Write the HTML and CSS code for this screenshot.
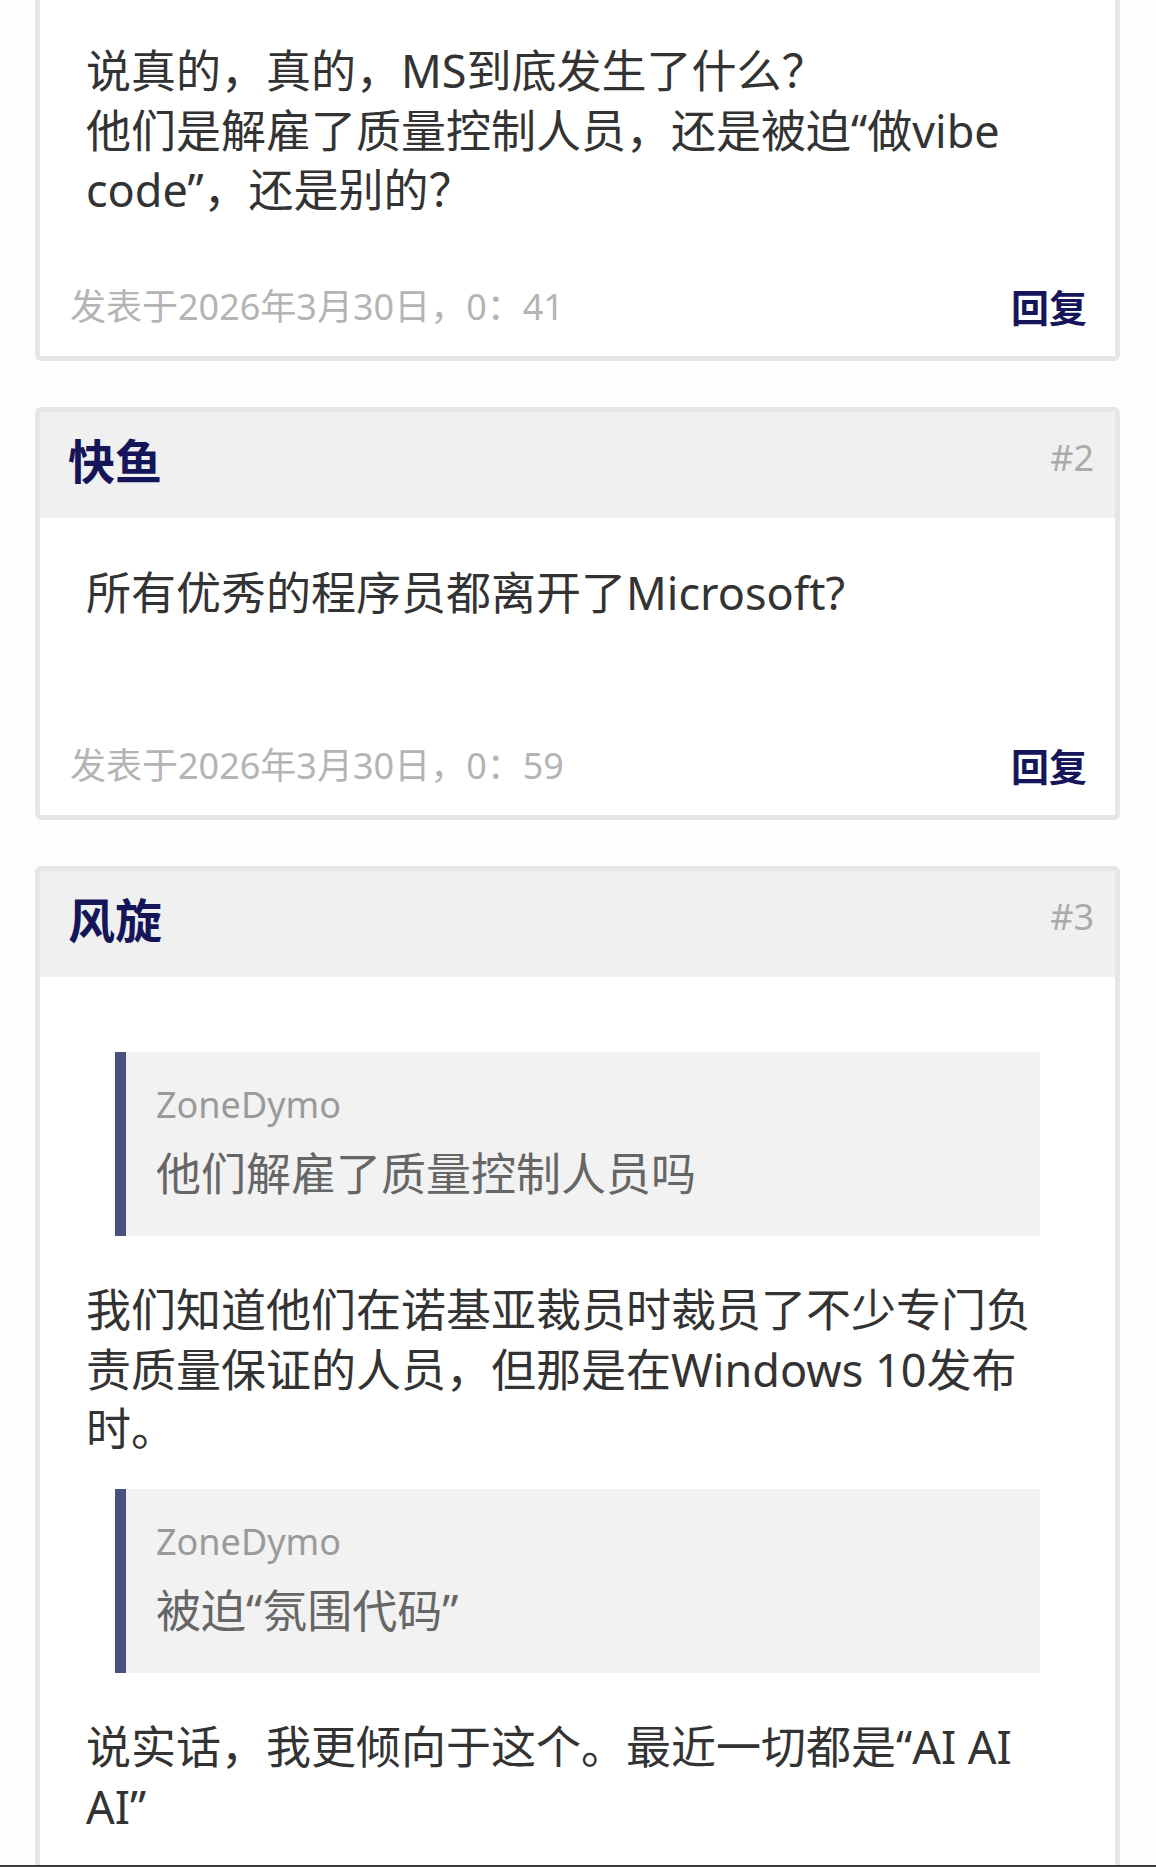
FILE: index.html
```html
<!DOCTYPE html>
<html lang="zh-CN">
<head>
<meta charset="utf-8">
<title>评论</title>
<link rel="stylesheet" href="styles.css">
</head>
<body>
<main class="thread">
  <article class="post post-cut">
    <div class="post-body">
      <p>说真的，真的，MS到底发生了什么？<br>他们是解雇了质量控制人员，还是被迫“做vibe code”，还是别的？</p>
    </div>
    <footer class="post-foot">
      <span class="post-date">发表于2026年3月30日，0：41</span>
      <a class="post-reply">回复</a>
    </footer>
  </article>

  <article class="post">
    <header class="post-head">
      <span class="post-author">快鱼</span>
      <span class="post-num">#2</span>
    </header>
    <div class="post-body post-body-min">
      <p>所有优秀的程序员都离开了Microsoft?</p>
    </div>
    <footer class="post-foot">
      <span class="post-date">发表于2026年3月30日，0：59</span>
      <a class="post-reply">回复</a>
    </footer>
  </article>

  <article class="post">
    <header class="post-head">
      <span class="post-author">风旋</span>
      <span class="post-num">#3</span>
    </header>
    <div class="post-body">
      <blockquote class="quote">
        <div class="quote-author">ZoneDymo</div>
        <div class="quote-text">他们解雇了质量控制人员吗</div>
      </blockquote>
      <p>我们知道他们在诺基亚裁员时裁员了不少专门负责质量保证的人员，但那是在Windows 10发布时。</p>
      <blockquote class="quote">
        <div class="quote-author">ZoneDymo</div>
        <div class="quote-text">被迫“氛围代码”</div>
      </blockquote>
      <p>说实话，我更倾向于这个。最近一切都是“AI AI AI”</p>
    </div>
  </article>
</main>
<div class="screen-edge"></div>
</body>
</html>
```
FILE: styles.css
```css
html, body {
  margin: 0;
  padding: 0;
  height: 1867px;
  overflow: hidden;
  background: #fdfdfd;
}

body {
  font-family: "Noto Sans", "Noto Sans CJK SC", sans-serif;
  color: #333333;
}

.thread {
  display: flex;
  flex-direction: column;
  gap: 46px;
  padding: 0 36px 0 35px;
}

.post {
  background: #ffffff;
  border: 5px solid #e6e6e6;
  border-radius: 6px;
}

.post-cut {
  border-top: 0;
  border-top-left-radius: 0;
  border-top-right-radius: 0;
}

.post-head {
  height: 106px;
  box-sizing: border-box;
  background: #f0f0f0;
  display: flex;
  align-items: center;
  justify-content: space-between;
  padding: 0 21px 8px 28px;
}

.post-author {
  font-size: 47px;
  font-weight: 700;
  color: #15155a;
  line-height: 60px;
}

.post-num {
  font-size: 36px;
  color: #ababab;
  line-height: 50px;
  margin-bottom: 6px;
}

.post-body {
  padding: 45px 46px 30px 46px;
  font-size: 45px;
  line-height: 59.5px;
}

.post-cut .post-body {
  padding-top: 41px;
}

.post-body-min {
  min-height: 116px;
}

.post-body p {
  margin: 0;
}

.quote {
  margin: 30px 29px 44px 29px;
  background: #f2f2f2;
  border-left: 11px solid #46517f;
  padding: 28px 30px 33px 30px;
}

.quote-author {
  font-size: 36px;
  line-height: 49px;
  color: #9a9a9a;
  margin-bottom: 15px;
}

.quote-text {
  font-size: 45px;
  line-height: 59.5px;
  color: #666666;
}

.post-foot {
  display: flex;
  align-items: center;
  justify-content: space-between;
  padding: 32px 28px 24px 30px;
  height: 50px;
}

.post-date {
  font-size: 36px;
  color: #b4b4b4;
  line-height: 50px;
}

.post-reply {
  font-size: 38px;
  font-weight: 700;
  color: #15155a;
  line-height: 50px;
}

.screen-edge {
  position: fixed;
  left: 0;
  right: 0;
  bottom: 0;
  height: 2px;
  background: #3a3a3a;
}
```
